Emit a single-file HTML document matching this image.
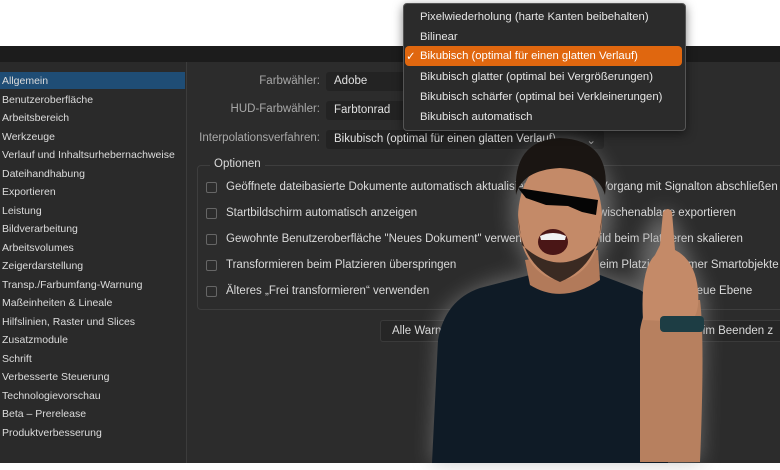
<!DOCTYPE html>
<html><head><meta charset="utf-8"><style>
*{margin:0;padding:0;box-sizing:border-box}
body{width:780px;height:470px;background:#fff;position:relative;overflow:hidden;font-family:"Liberation Sans",sans-serif;font-size:11px;color:#d8d8d8}
.a{position:absolute;white-space:nowrap}
#title{left:0;top:46px;width:780px;height:16px;background:#1c1c1c}
#main{left:0;top:62px;width:780px;height:401px;background:#2c2c2c}
#side{left:0;top:62px;width:187px;height:401px;border-right:1px solid #3c3c3c;background:#2a2a2a}
.si{left:2px;font-size:10.5px;color:#dcdcdc}
.lbl{color:#a8a8a8;text-align:right;width:160px;left:160px;font-size:11.5px}
.pop{left:326px;height:19px;background:#232323;border-radius:3px;padding:3px 8px;font-size:11.5px;color:#e0e0e0}
.cb{width:11px;height:11px;border:1px solid #666;border-radius:2px;left:206px}
.ct{left:226px;font-size:11.5px;color:#dadada}
.rt{font-size:11.5px;color:#dadada}
#menu{left:403px;top:3px;width:283px;height:128px;background:#2b2b2b;border:1px solid #555;border-radius:4px;box-shadow:0 3px 10px rgba(0,0,0,.5)}
.mi{left:420px;font-size:11.3px;color:#e6e6e6}
</style></head><body>
<div class="a" id="title"></div>
<div class="a" id="main"></div>
<div class="a" id="side"></div>
<div class="a" style="left:0;top:72px;width:185px;height:17px;background:#1f4d75"></div>
<div class="a si" style="top:75px">Allgemein</div>
<div class="a si" style="top:94px">Benutzeroberfläche</div>
<div class="a si" style="top:112px">Arbeitsbereich</div>
<div class="a si" style="top:131px">Werkzeuge</div>
<div class="a si" style="top:149px">Verlauf und Inhaltsurhebernachweise</div>
<div class="a si" style="top:168px">Dateihandhabung</div>
<div class="a si" style="top:186px">Exportieren</div>
<div class="a si" style="top:205px">Leistung</div>
<div class="a si" style="top:223px">Bildverarbeitung</div>
<div class="a si" style="top:242px">Arbeitsvolumes</div>
<div class="a si" style="top:260px">Zeigerdarstellung</div>
<div class="a si" style="top:279px">Transp./Farbumfang-Warnung</div>
<div class="a si" style="top:297px">Maßeinheiten &amp; Lineale</div>
<div class="a si" style="top:316px">Hilfslinien, Raster und Slices</div>
<div class="a si" style="top:334px">Zusatzmodule</div>
<div class="a si" style="top:353px">Schrift</div>
<div class="a si" style="top:371px">Verbesserte Steuerung</div>
<div class="a si" style="top:390px">Technologievorschau</div>
<div class="a si" style="top:408px">Beta – Prerelease</div>
<div class="a si" style="top:427px">Produktverbesserung</div>

<div class="a lbl" style="top:75px">Farbwähler:</div>
<div class="a lbl" style="top:103px">HUD-Farbwähler:</div>
<div class="a lbl" style="top:132px;left:140px;width:180px">Interpolationsverfahren:</div>
<div class="a pop" style="top:72px;width:80px">Adobe</div>
<div class="a pop" style="top:101px;width:80px">Farbtonrad</div>
<div class="a pop" style="top:130px;width:278px">Bikubisch (optimal für einen glatten Verlauf) <span style="position:absolute;right:8px;color:#999">⌄</span></div>

<div class="a" style="left:197px;top:165px;width:590px;height:145px;border:1px solid #3e3e3e;border-radius:4px"></div>
<div class="a" style="left:210px;top:158px;background:#2c2c2c;padding:0 4px;font-size:11.5px;color:#dadada">Optionen</div>
<div class="a cb" style="top:182px"></div><div class="a ct" style="top:181px">Geöffnete dateibasierte Dokumente automatisch aktualisieren</div>
<div class="a cb" style="top:208px"></div><div class="a ct" style="top:207px">Startbildschirm automatisch anzeigen</div>
<div class="a cb" style="top:234px"></div><div class="a ct" style="top:233px">Gewohnte Benutzeroberfläche "Neues Dokument" verwenden</div>
<div class="a cb" style="top:260px"></div><div class="a ct" style="top:259px">Transformieren beim Platzieren überspringen</div>
<div class="a cb" style="top:286px"></div><div class="a ct" style="top:285px">Älteres „Frei transformieren“ verwenden</div>
<div class="a rt" style="left:600px;top:181px">Vorgang mit Signalton abschließen</div>
<div class="a rt" style="left:592px;top:207px">Zwischenablage exportieren</div>
<div class="a rt" style="left:592px;top:233px">Bild beim Platzieren skalieren</div>
<div class="a rt" style="left:592px;top:259px">Beim Platzieren immer Smartobjekte</div>
<div class="a rt" style="left:650px;top:285px">Pinsels neue Ebene</div>
<div class="a" style="left:380px;top:320px;width:420px;height:22px;background:#262626;border:1px solid #3a3a3a;border-radius:3px"></div>
<div class="a rt" style="left:392px;top:325px">Alle Warnungen zurücksetzen</div>
<div class="a rt" style="left:690px;top:325px">beim Beenden z</div>

<svg class="a" style="left:0;top:0" width="780" height="470" viewBox="0 0 780 470">
<defs><filter id="g" x="-30%" y="-30%" width="160%" height="160%"><feGaussianBlur stdDeviation="10"/></filter></defs>
<g filter="url(#g)" opacity=".55" fill="#9a9a9a">
<ellipse cx="562" cy="210" rx="50" ry="70"/>
<path d="M432 462 L440 320 Q470 275 560 272 Q640 275 662 300 L665 462Z"/>
<path d="M640 250 Q650 215 668 210 Q690 260 705 300 L700 462 L640 462Z"/>
</g>
<path d="M432 463 L438 340 Q445 300 480 288 L530 275 Q565 300 600 275 L640 290 Q665 305 665 360 L668 463Z" fill="#0f1b26"/>
<path d="M525 260 L530 285 Q562 305 600 280 L598 250Z" fill="#b27a5a"/>
<ellipse cx="560" cy="218" rx="42" ry="62" fill="#c48a68"/>
<path d="M518 215 Q520 265 560 282 Q600 265 602 215 L598 245 Q560 280 522 245Z" fill="#3a2a22"/>
<path d="M516 195 Q512 140 560 138 Q612 140 605 195 Q598 170 560 168 Q522 170 516 195Z" fill="#1a1512"/>
<path d="M518 188 L598 200 L596 215 L582 212 L568 206 L546 205 L526 198Z" fill="#050505"/>
<ellipse cx="553" cy="242" rx="15" ry="13" fill="#4a1616"/>
<path d="M540 236 Q553 230 566 236 L565 240 L541 240Z" fill="#f1f1f1"/>
<path d="M640 462 L640 330 Q645 300 660 300 L700 300 Q705 340 700 462Z" fill="#b7805f"/>
<path d="M643 320 Q640 270 655 255 L660 245 L663 212 Q668 206 672 212 L675 250 Q695 260 698 290 Q700 315 690 322Z" fill="#c48a68"/>
<rect x="660" y="316" width="44" height="16" rx="4" fill="#1d3d44"/>
</svg>

<div class="a" id="menu"></div>
<div class="a" style="left:405px;top:46px;width:277px;height:20px;background:#e0670f;border-radius:4px"></div>
<div class="a mi" style="top:11px">Pixelwiederholung (harte Kanten beibehalten)</div>
<div class="a mi" style="top:31px">Bilinear</div>
<div class="a mi" style="top:50px;color:#fff"><span style="position:absolute;left:-14px">✓</span>Bikubisch (optimal für einen glatten Verlauf)</div>
<div class="a mi" style="top:71px">Bikubisch glatter (optimal bei Vergrößerungen)</div>
<div class="a mi" style="top:91px">Bikubisch schärfer (optimal bei Verkleinerungen)</div>
<div class="a mi" style="top:111px">Bikubisch automatisch</div>
</body></html>
